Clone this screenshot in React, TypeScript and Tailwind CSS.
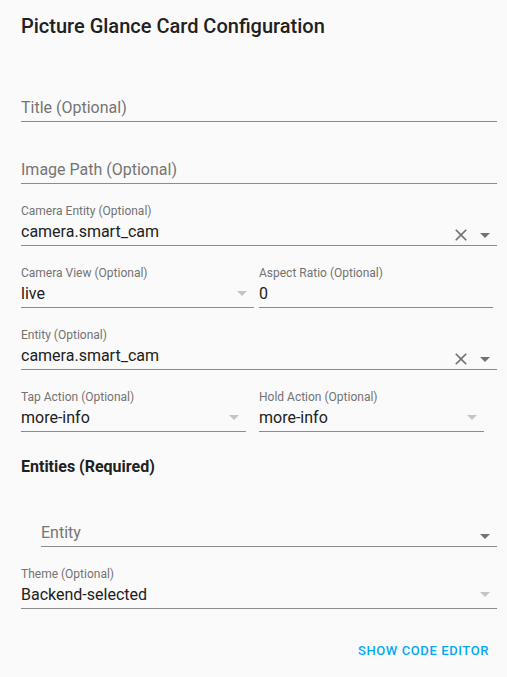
import React from 'react';

const CloseIcon: React.FC = () => (
  <svg viewBox="0 0 24 24" className="w-[20px] h-[20px]" fill="#737373">
    <path d="M19,6.41L17.59,5L12,10.59L6.41,5L5,6.41L10.59,12L5,17.59L6.41,19L12,13.41L17.59,19L19,17.59L13.41,12L19,6.41Z" />
  </svg>
);

const MenuDown: React.FC<{ light?: boolean }> = ({ light }) => (
  <svg viewBox="0 0 24 24" className="w-[24px] h-[24px]" fill={light ? '#c4c4c4' : '#737373'}>
    <path d="M7,10L12,15L17,10H7Z" />
  </svg>
);

type FieldProps = {
  label?: string;
  value?: string;
  placeholder?: string;
  clearable?: boolean;
  dropdown?: 'dark' | 'light';
  className?: string;
};

const Field: React.FC<FieldProps> = ({ label, value, placeholder, clearable, dropdown, className = '' }) => (
  <div className={`relative h-[62px] flex flex-col justify-end border-b border-[#8c8c8c] ${className}`}>
    {label && <div className="text-[12px] leading-4 text-[#737373] mb-[1px]">{label}</div>}
    {value !== undefined ? (
      <div className="text-[16px] leading-6 text-[#212121] pb-[1px]">{value}</div>
    ) : (
      <div className="text-[16px] leading-6 text-[#757575] pb-[1px]">{placeholder}</div>
    )}
    {dropdown === 'dark' && (
      <div className="absolute right-0 bottom-[-1px] flex items-center">
        {clearable && <CloseIcon />}
        <div className="ml-[2px] mb-[-1px]">
          <MenuDown />
        </div>
      </div>
    )}
    {dropdown === 'light' && (
      <div className="absolute right-0 bottom-[2px]">
        <MenuDown light />
      </div>
    )}
  </div>
);

export default function App() {
  return (
    <div className="min-h-[677px] bg-[#fafafa] pl-[21px] pr-[10px] pt-[14px] font-['Roboto',sans-serif]">
      <h1 className="text-[20px] leading-6 font-medium text-[#212121]">Picture Glance Card Configuration</h1>

      <div className="mt-[22px]">
        <Field placeholder="Title (Optional)" />
        <Field placeholder="Image Path (Optional)" />
        <Field label="Camera Entity (Optional)" value="camera.smart_cam" clearable dropdown="dark" />
        <div className="flex">
          <Field label="Camera View (Optional)" value="live" dropdown="light" className="w-[233px]" />
          <Field label="Aspect Ratio (Optional)" value="0" className="w-[234px] ml-[5px]" />
        </div>
        <Field label="Entity (Optional)" value="camera.smart_cam" clearable dropdown="dark" />
        <div className="flex">
          <Field label="Tap Action (Optional)" value="more-info" dropdown="light" className="w-[225px]" />
          <Field label="Hold Action (Optional)" value="more-info" dropdown="light" className="w-[225px] ml-[13px]" />
        </div>
      </div>

      <h2 className="mt-[23px] text-[16px] leading-6 font-bold text-[#212121]">Entities (Required)</h2>

      <div className="mt-[6px]">
        <Field placeholder="Entity" dropdown="dark" className="ml-[20px]" />
        <Field label="Theme (Optional)" value="Backend-selected" dropdown="light" />
      </div>

      <div className="mt-[32px] flex justify-end pr-[8px]">
        <button className="text-[13px] leading-5 font-medium tracking-[0.6px] uppercase text-[#03a9f4]">
          Show Code Editor
        </button>
      </div>
    </div>
  );
}
